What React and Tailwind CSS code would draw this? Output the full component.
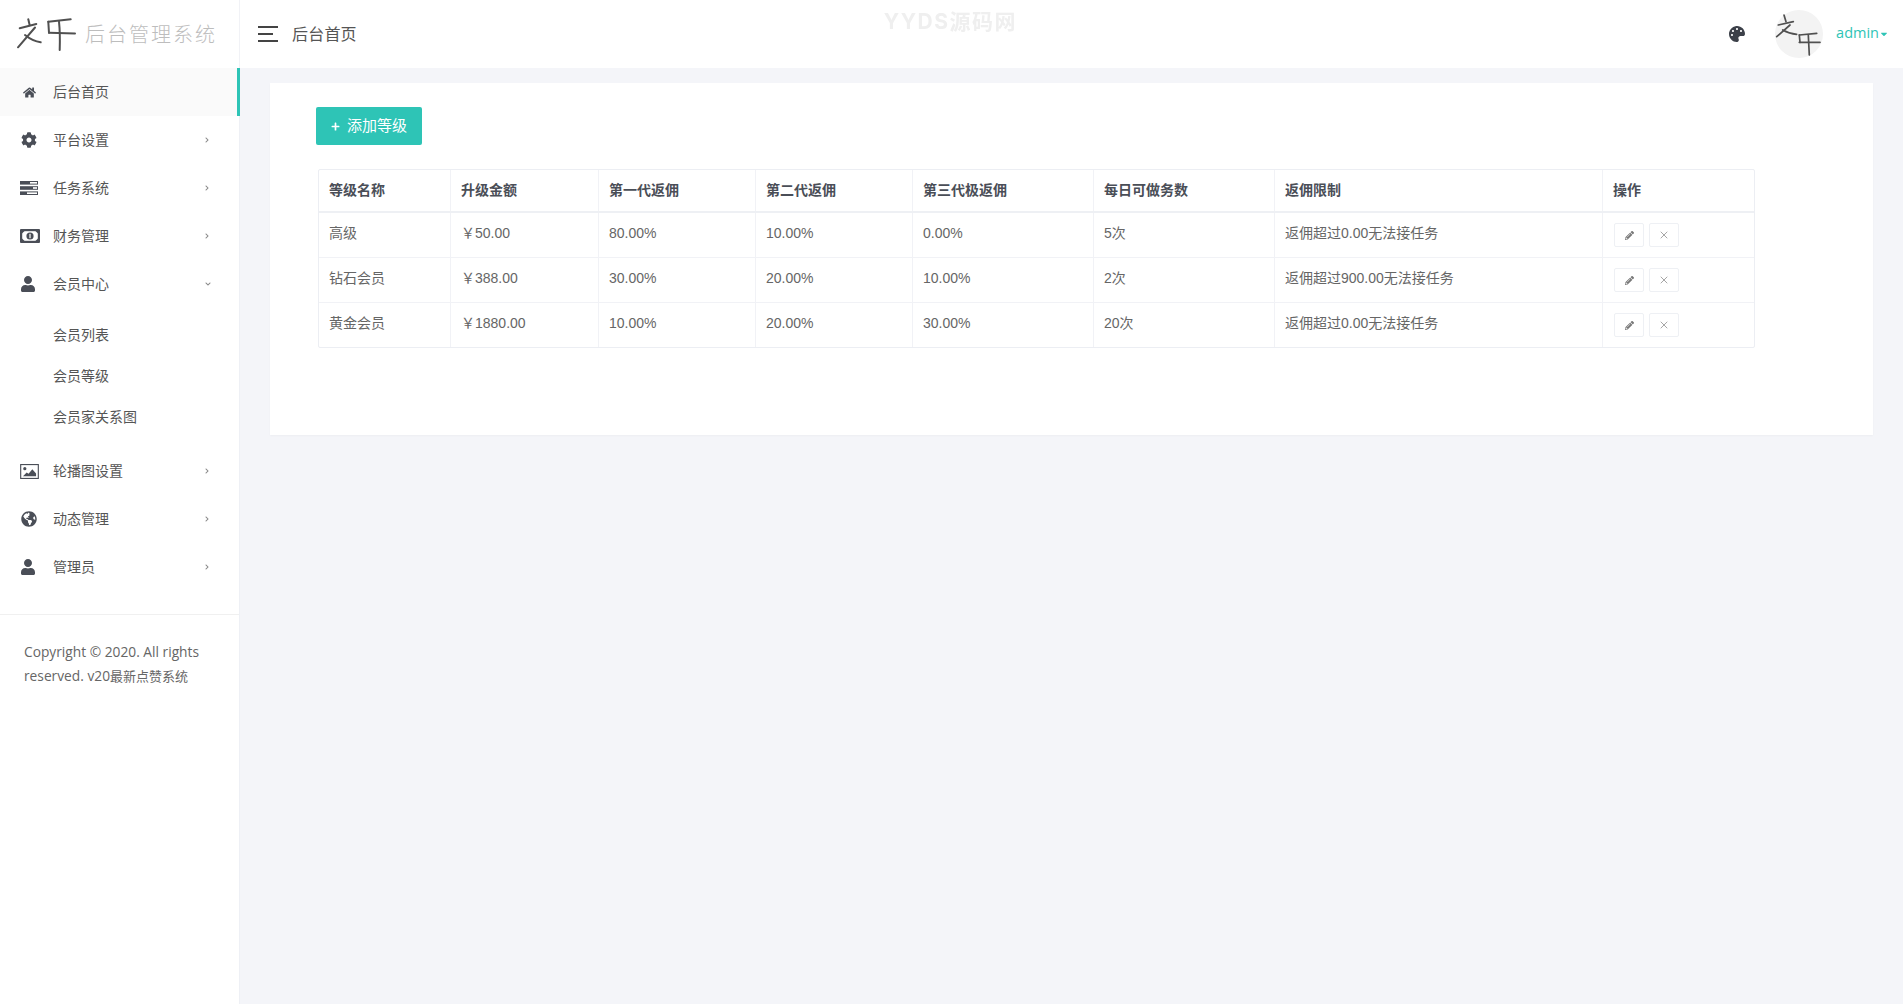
import { FaHome, FaCog, FaUser, FaGlobeAmericas, FaPalette, FaPencilAlt, FaPlus, FaChevronRight, FaChevronDown, FaCaretDown } from 'react-icons/fa';
import { X } from 'lucide-react';

const cjk = "font-['Liberation_Sans','Noto_Sans_CJK_SC',sans-serif]";

function Logo({ className }) {
  return (
    <svg viewBox="0 0 62 36" fill="none" stroke="#505050" strokeWidth="2" strokeLinecap="round" className={className}>
      <path d="M13.3 3.3 L14.7 9.3" />
      <path d="M4.7 12.3 L21.3 8" />
      <path d="M20 11.5 L3 31.3" />
      <path d="M10 19 C15 23 20 25.5 25.7 26.3" />
      <path d="M33.3 5.7 L55.7 3.3" />
      <path d="M33.3 5.7 L34 16.7" />
      <path d="M34 16.7 L60 17.5" />
      <path d="M44 5.7 C45 15 45 25 44.7 34" />
    </svg>
  );
}

function AvatarLogo() {
  return (
    <svg viewBox="0 0 48 48" fill="none" stroke="#505050" strokeWidth="1.7" strokeLinecap="round" className="absolute inset-0 w-[48px] h-[48px]">
      <path d="M9 5 L11 11.7" />
      <path d="M3.3 15 L18.3 11.7" />
      <path d="M15 15 L1.7 26.7" />
      <path d="M7.7 20 C12 22.5 17 24 21.7 24.3" />
      <path d="M24.3 25 L41.7 23.3" />
      <path d="M24.3 25 L25 32.3" />
      <path d="M24.3 32.3 L45 32.3" />
      <path d="M33.3 25 L34.3 45" />
    </svg>
  );
}

function TasksIcon() {
  return (
    <svg viewBox="0 0 18 14" className="w-[18px] h-[14px]" fill="#4a4e57">
      <rect x="0" y="0" width="18" height="3.6" />
      <rect x="0" y="5.2" width="18" height="3.6" />
      <rect x="0" y="10.4" width="18" height="3.6" />
      <rect x="10" y="1" width="7" height="1.6" fill="#fff" />
      <rect x="13" y="6.2" width="4" height="1.6" fill="#fff" />
      <rect x="7" y="11.4" width="10" height="1.6" fill="#fff" />
    </svg>
  );
}

function MoneyIcon() {
  return (
    <svg viewBox="0 0 20 14" className="w-[20px] h-[14px] ml-[2px]">
      <rect x="0" y="0" width="20" height="14" rx="1" fill="#4a4e57" />
      <rect x="2.2" y="2.2" width="15.6" height="9.6" fill="#fff" />
      <path d="M2 2h2.6L2 4.6zM18 2h-2.6L18 4.6zM2 12h2.6L2 9.4zM18 12h-2.6L18 9.4z" fill="#4a4e57" />
      <circle cx="10" cy="7" r="3.6" fill="#4a4e57" />
      <rect x="9.4" y="4.8" width="1.2" height="4.4" fill="#fff" />
    </svg>
  );
}

function ImageIcon() {
  return (
    <svg viewBox="0 0 20 16" className="w-[19px] h-[15px] ml-[1px]">
      <rect x="0.6" y="0.6" width="18.8" height="14.8" fill="#fff" stroke="#4a4e57" strokeWidth="1.2" />
      <circle cx="5" cy="5" r="1.7" fill="#4a4e57" />
      <path d="M3 13 L7 9 L9 10.5 L13 5.5 L17 10 L17 13 Z" fill="#4a4e57" />
    </svg>
  );
}

const menu = [
  { label: '后台首页', icon: <FaHome size={13} className="ml-[2px]" />, active: true },
  { label: '平台设置', icon: <FaCog size={16} />, arrow: true },
  { label: '任务系统', icon: <TasksIcon />, arrow: true },
  { label: '财务管理', icon: <MoneyIcon />, arrow: true },
  {
    label: '会员中心',
    icon: <FaUser size={16} className="-ml-[1px]" />,
    open: true,
    children: ['会员列表', '会员等级', '会员家关系图'],
  },
  { label: '轮播图设置', icon: <ImageIcon />, arrow: true },
  { label: '动态管理', icon: <FaGlobeAmericas size={16} />, arrow: true },
  { label: '管理员', icon: <FaUser size={16} className="-ml-[1px]" />, arrow: true },
];

const columns = [
  { title: '等级名称', w: 'w-[132px]' },
  { title: '升级金额', w: 'w-[148px]' },
  { title: '第一代返佣', w: 'w-[157px]' },
  { title: '第二代返佣', w: 'w-[157px]' },
  { title: '第三代极返佣', w: 'w-[181px]' },
  { title: '每日可做务数', w: 'w-[181px]' },
  { title: '返佣限制', w: 'w-[328px]' },
  { title: '操作', w: 'w-[151px]' },
];

const rows = [
  ['高级', '￥50.00', '80.00%', '10.00%', '0.00%', '5次', '返佣超过0.00无法接任务'],
  ['钻石会员', '￥388.00', '30.00%', '20.00%', '10.00%', '2次', '返佣超过900.00无法接任务'],
  ['黄金会员', '￥1880.00', '10.00%', '20.00%', '30.00%', '20次', '返佣超过0.00无法接任务'],
];

function MenuItem({ item }) {
  return (
    <>
      <div className={`relative flex items-center h-12 ${item.active ? 'bg-[#fafafa]' : ''}`}>
        <span className="w-[53px] flex justify-center pl-[4px] text-[#4a4e57]">{item.icon}</span>
        <span className="text-[14px] text-[#555]">{item.label}</span>
        {item.arrow && <FaChevronRight size={6} className="absolute right-[29px] top-[21px] text-[#888]" />}
        {item.open && <FaChevronDown size={6} className="absolute right-[28px] top-[21px] text-[#888]" />}
        {item.active && <span className="absolute -right-px top-0 bottom-0 w-[3px] bg-[#2ec4b6]" />}
      </div>
      {item.children && (
        <div className="pt-[7px] pb-[9px]">
          {item.children.map((c) => (
            <div key={c} className="h-[41px] pl-[53px] flex items-center text-[14px] text-[#555]">{c}</div>
          ))}
        </div>
      )}
    </>
  );
}

export default function App() {
  return (
    <div className={`${cjk} min-h-screen bg-[#f4f5f9] flex flex-col`}>
      {/* top bar */}
      <header className="h-[68px] bg-white flex items-center shrink-0">
        <div className="w-[240px] h-full flex items-center pl-[15px] border-r border-[#f1f2f6]">
          <Logo className="w-[62px] h-[36px]" />
          <span className="ml-[8px] mt-[1px] text-[20px] tracking-[2px] font-light text-[#bdbdbd] whitespace-nowrap">后台管理系统</span>
        </div>
        <div className="flex items-center pl-[18px] flex-1">
          <div className="flex flex-col gap-[5px] w-[20px]">
            <span className="h-[2px] bg-[#444] w-full" />
            <span className="h-[2px] bg-[#444] w-[15px]" />
            <span className="h-[2px] bg-[#444] w-full" />
          </div>
          <span className="ml-[14px] mt-[1px] text-[16px] tracking-[0.2px] text-[#555]">后台首页</span>
          <span className="ml-[527px] -mt-[24px] font-['Inter','Noto_Sans_CJK_SC',sans-serif] text-[21px] font-bold tracking-[1.5px] text-[#efefef] blur-[0.5px]">YYDS源码网</span>
        </div>
        <div className="flex items-center pr-[14px]">
          <FaPalette size={16} className="text-[#3c4049]" />
          <div className="relative ml-[30px] w-[48px] h-[48px] rounded-full bg-[#f3f3f3]">
            <AvatarLogo />
          </div>
          <span className="ml-[13px] -mt-[2px] font-['Open_Sans',sans-serif] text-[14.5px] text-[#2ec4b6]">admin</span>
          <FaCaretDown size={10} className="text-[#2ec4b6]" />
        </div>
      </header>

      <div className="flex flex-1">
        {/* sidebar */}
        <aside className="w-[240px] bg-white border-r border-[#eef0f5] shrink-0">
          <nav className="pb-[23px] border-b border-[#f0f0f0]">
            {menu.map((item) => (
              <MenuItem key={item.label} item={item} />
            ))}
          </nav>
          <p className="pl-[24px] pr-[30px] pt-[25px] font-['Open_Sans','Noto_Sans_CJK_SC',sans-serif] text-[13.75px] leading-[24px] text-[#666]">
            Copyright © 2020. All rights reserved. v20<span className="text-[13px]">最新点赞系统</span>
          </p>
        </aside>

        {/* content */}
        <main className="flex-1 pt-[15px] pl-[30px] pr-[30px]">
          <section className="bg-white pt-[24px] pb-[87px] pl-[46px] shadow-[0_1px_2px_rgba(0,0,0,0.03)]">
            <button className="flex items-center h-[38px] w-[106px] justify-center gap-[7px] bg-[#2ec4b6] text-white text-[15px] rounded-[2px]">
              <FaPlus size={9} />
              添加等级
            </button>
            <div className="mt-[24px] ml-[2px] w-[1437px] border border-[#eceef3] rounded-[2px]">
              <div className="flex h-[43px] border-b-2 border-[#eef0f4]">
                {columns.map((c, i) => (
                  <div key={c.title} className={`${c.w} flex items-center pl-[10px] text-[14px] font-bold text-[#4a4e57] ${i < 7 ? 'border-r border-[#f1f2f6]' : ''}`}>
                    {c.title}
                  </div>
                ))}
              </div>
              {rows.map((r, ri) => (
                <div key={r[0]} className={`flex ${ri < 2 ? 'h-[45px] border-b border-[#f1f2f6]' : 'h-[44px]'}`}>
                  {r.map((v, i) => (
                    <div key={i} className={`${columns[i].w} flex items-center pl-[10px] pb-[3px] text-[14px] text-[#666] border-r border-[#f1f2f6]`}>
                      {v}
                    </div>
                  ))}
                  <div className={`${columns[7].w} flex items-center pl-[11px] gap-[5px]`}>
                    <span className="w-[30px] h-[24px] flex items-center justify-center border border-[#eef0f4] rounded-[2px] text-[#777]">
                      <FaPencilAlt size={9} />
                    </span>
                    <span className="w-[30px] h-[24px] flex items-center justify-center border border-[#eef0f4] rounded-[2px] text-[#888]">
                      <X size={12} strokeWidth={1.5} />
                    </span>
                  </div>
                </div>
              ))}
            </div>
          </section>
        </main>
      </div>
    </div>
  );
}
